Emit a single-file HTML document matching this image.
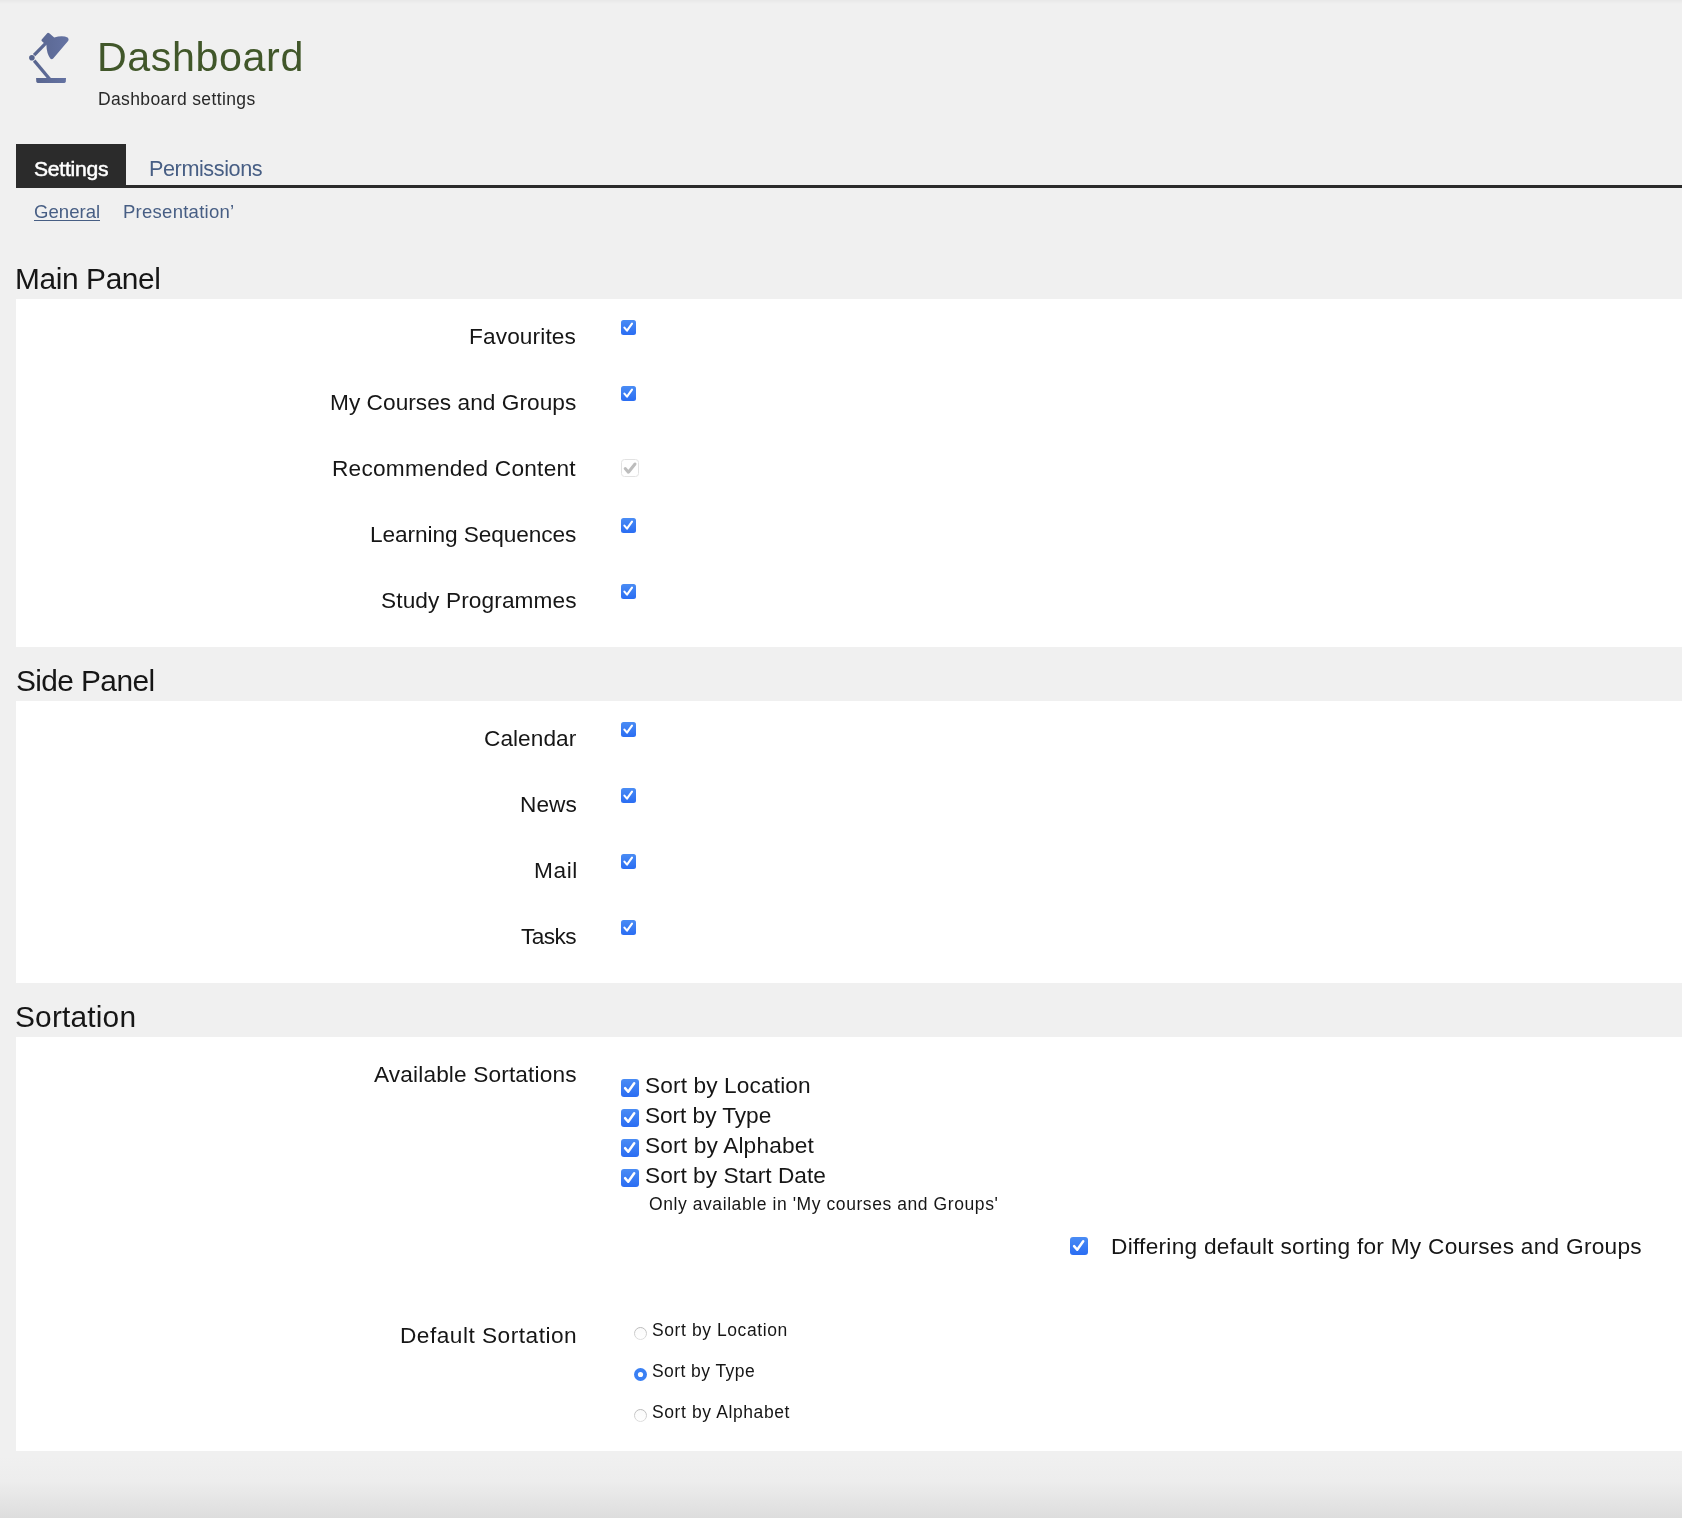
<!DOCTYPE html>
<html><head><meta charset="utf-8"><title>Dashboard</title>
<style>
html,body{margin:0;padding:0;}
body{width:1682px;height:1518px;position:relative;overflow:hidden;background:#f0f0f0;font-family:"Liberation Sans",sans-serif;}
.t{position:absolute;white-space:nowrap;line-height:0;will-change:transform;font-family:"Liberation Sans",sans-serif;}
.a{position:absolute;display:block;}
.b{position:absolute;}
</style></head><body>
<div class="b" style="left:0;top:0;width:1682px;height:4px;background:linear-gradient(#e8e8e8,#f0f0f0)"></div>
<div class="b" style="left:0;top:1456px;width:1682px;height:62px;background:linear-gradient(#f0f0f0 0%,#ededed 40%,#e4e4e4 75%,#dddddd 100%)"></div>
<div class="b" style="left:16px;top:144px;width:110px;height:44px;background:#2b2b2b"></div>
<div class="b" style="left:16px;top:185px;width:1666px;height:3px;background:#2b2b2b"></div>
<div class="b" style="left:34px;top:220px;width:66px;height:1px;background:#475e84"></div>
<div class="b" style="left:16px;top:299px;width:1666px;height:348px;background:#fff"></div>
<div class="b" style="left:16px;top:701px;width:1666px;height:282px;background:#fff"></div>
<div class="b" style="left:16px;top:1037px;width:1666px;height:414px;background:#fff"></div>
<svg class="a" style="left:0;top:0" width="100" height="100" viewBox="0 0 100 100">
<defs><linearGradient id="lg" gradientUnits="userSpaceOnUse" x1="29" y1="0" x2="69" y2="0"><stop offset="0" stop-color="#56638c"/><stop offset="1" stop-color="#6573a3"/></linearGradient></defs>
<g fill="url(#lg)">
<path d="M47.2,33.2 L41.7,39.4 Q41.1,40.4 41.9,41.3 L44.0,43.0 L46.4,45.0 Q46.6,53.5 50.3,58.4 Q51.7,60.0 53.2,58.4 L68.3,40.8 Q69.3,39.0 67.6,37.6 Q63.0,35.2 54.2,37.4 L49.3,33.3 Q48.0,32.5 47.2,33.2 Z"/>
<circle cx="31.9" cy="57.8" r="2.8"/>
<path d="M36.1,78.1 L66.0,78.1 L65.8,81.6 Q65.6,82.9 64.4,82.9 L37.6,82.9 Q36.4,82.9 36.3,81.6 Z"/>
</g>
<g stroke="url(#lg)" fill="none" stroke-width="3.3">
<line x1="34.1" y1="55.1" x2="45.4" y2="43.7"/>
<line x1="34.2" y1="60.6" x2="49.6" y2="79.0"/>
</g></svg>
<div class="t" style="left:96.92px;top:56.80px;font-size:41.2px;letter-spacing:0.600px;color:#41572a;">Dashboard</div>
<div class="t" style="left:97.96px;top:99.10px;font-size:17.51px;letter-spacing:0.376px;color:#282828;">Dashboard settings</div>
<div class="t" style="left:33.64px;top:168.80px;font-size:21.12px;letter-spacing:-0.250px;color:#ffffff;-webkit-text-stroke:0.5px #fff;">Settings</div>
<div class="t" style="left:149.43px;top:168.80px;font-size:21.63px;letter-spacing:-0.421px;color:#475e84;">Permissions</div>
<div class="t" style="left:33.67px;top:211.70px;font-size:18.54px;letter-spacing:0.041px;color:#475e84;">General</div>
<div class="t" style="left:122.98px;top:211.70px;font-size:18.54px;letter-spacing:0.250px;color:#475e84;">Presentation’</div>
<div class="t" style="left:15.05px;top:278.70px;font-size:29.87px;letter-spacing:-0.382px;color:#161616;">Main Panel</div>
<div class="t" style="left:15.64px;top:681.20px;font-size:29.87px;letter-spacing:-0.600px;color:#161616;">Side Panel</div>
<div class="t" style="left:15.34px;top:1017.10px;font-size:29.87px;letter-spacing:0.186px;color:#161616;">Sortation</div>
<div class="t" style="left:469.44px;top:335.80px;font-size:22.66px;letter-spacing:0.123px;color:#161616;">Favourites</div>
<div class="t" style="left:330.04px;top:401.90px;font-size:22.66px;letter-spacing:0.037px;color:#161616;">My Courses and Groups</div>
<div class="t" style="left:332.04px;top:468.00px;font-size:22.66px;letter-spacing:0.241px;color:#161616;">Recommended Content</div>
<div class="t" style="left:370.04px;top:534.00px;font-size:22.66px;letter-spacing:-0.092px;color:#161616;">Learning Sequences</div>
<div class="t" style="left:380.67px;top:600.00px;font-size:22.66px;letter-spacing:0.116px;color:#161616;">Study Programmes</div>
<div class="t" style="left:483.65px;top:737.90px;font-size:22.66px;letter-spacing:0.041px;color:#161616;">Calendar</div>
<div class="t" style="left:519.54px;top:804.00px;font-size:22.66px;letter-spacing:0.042px;color:#161616;">News</div>
<div class="t" style="left:533.68px;top:870.00px;font-size:22.66px;letter-spacing:0.600px;color:#161616;">Mail</div>
<div class="t" style="left:520.81px;top:935.80px;font-size:22.66px;letter-spacing:-0.600px;color:#161616;">Tasks</div>
<div class="t" style="left:373.86px;top:1074.10px;font-size:22.66px;letter-spacing:0.138px;color:#161616;">Available Sortations</div>
<div class="t" style="left:400.34px;top:1334.90px;font-size:22.66px;letter-spacing:0.492px;color:#161616;">Default Sortation</div>
<div class="t" style="left:644.57px;top:1085.10px;font-size:22.66px;letter-spacing:0.132px;color:#161616;">Sort by Location</div>
<div class="t" style="left:644.57px;top:1115.00px;font-size:22.66px;letter-spacing:-0.050px;color:#161616;">Sort by Type</div>
<div class="t" style="left:644.57px;top:1144.90px;font-size:22.66px;letter-spacing:0.166px;color:#161616;">Sort by Alphabet</div>
<div class="t" style="left:644.57px;top:1175.10px;font-size:22.66px;letter-spacing:0.051px;color:#161616;">Sort by Start Date</div>
<div class="t" style="left:649.07px;top:1203.50px;font-size:17.51px;letter-spacing:0.577px;color:#161616;">Only available in 'My courses and Groups'</div>
<div class="t" style="left:1111.14px;top:1246.40px;font-size:22.66px;letter-spacing:0.271px;color:#161616;">Differing default sorting for My Courses and Groups</div>
<div class="t" style="left:652.00px;top:1329.60px;font-size:17.51px;letter-spacing:0.584px;color:#161616;">Sort by Location</div>
<div class="t" style="left:652.00px;top:1370.70px;font-size:17.51px;letter-spacing:0.430px;color:#161616;">Sort by Type</div>
<div class="t" style="left:652.00px;top:1411.60px;font-size:17.51px;letter-spacing:0.600px;color:#161616;">Sort by Alphabet</div>
<svg class="a" style="left:621px;top:320px" width="15" height="15" viewBox="0 0 15 15"><defs><linearGradient id="g621320" x1="0" y1="0" x2="0" y2="1"><stop offset="0" stop-color="#4a8cf4"/><stop offset="1" stop-color="#2a6df3"/></linearGradient></defs><rect x="0" y="0" width="15" height="15" rx="2.50" fill="url(#g621320)"/><path d="M3.4,7.6 L6.0,10.6 L11.0,3.6" fill="none" stroke="#fff" stroke-width="2.1" stroke-linecap="round" stroke-linejoin="round"/></svg>
<svg class="a" style="left:621px;top:386px" width="15" height="15" viewBox="0 0 15 15"><defs><linearGradient id="g621386" x1="0" y1="0" x2="0" y2="1"><stop offset="0" stop-color="#4a8cf4"/><stop offset="1" stop-color="#2a6df3"/></linearGradient></defs><rect x="0" y="0" width="15" height="15" rx="2.50" fill="url(#g621386)"/><path d="M3.4,7.6 L6.0,10.6 L11.0,3.6" fill="none" stroke="#fff" stroke-width="2.1" stroke-linecap="round" stroke-linejoin="round"/></svg>
<svg class="a" style="left:621px;top:518px" width="15" height="15" viewBox="0 0 15 15"><defs><linearGradient id="g621518" x1="0" y1="0" x2="0" y2="1"><stop offset="0" stop-color="#4a8cf4"/><stop offset="1" stop-color="#2a6df3"/></linearGradient></defs><rect x="0" y="0" width="15" height="15" rx="2.50" fill="url(#g621518)"/><path d="M3.4,7.6 L6.0,10.6 L11.0,3.6" fill="none" stroke="#fff" stroke-width="2.1" stroke-linecap="round" stroke-linejoin="round"/></svg>
<svg class="a" style="left:621px;top:584px" width="15" height="15" viewBox="0 0 15 15"><defs><linearGradient id="g621584" x1="0" y1="0" x2="0" y2="1"><stop offset="0" stop-color="#4a8cf4"/><stop offset="1" stop-color="#2a6df3"/></linearGradient></defs><rect x="0" y="0" width="15" height="15" rx="2.50" fill="url(#g621584)"/><path d="M3.4,7.6 L6.0,10.6 L11.0,3.6" fill="none" stroke="#fff" stroke-width="2.1" stroke-linecap="round" stroke-linejoin="round"/></svg>
<svg class="a" style="left:621px;top:722px" width="15" height="15" viewBox="0 0 15 15"><defs><linearGradient id="g621722" x1="0" y1="0" x2="0" y2="1"><stop offset="0" stop-color="#4a8cf4"/><stop offset="1" stop-color="#2a6df3"/></linearGradient></defs><rect x="0" y="0" width="15" height="15" rx="2.50" fill="url(#g621722)"/><path d="M3.4,7.6 L6.0,10.6 L11.0,3.6" fill="none" stroke="#fff" stroke-width="2.1" stroke-linecap="round" stroke-linejoin="round"/></svg>
<svg class="a" style="left:621px;top:788px" width="15" height="15" viewBox="0 0 15 15"><defs><linearGradient id="g621788" x1="0" y1="0" x2="0" y2="1"><stop offset="0" stop-color="#4a8cf4"/><stop offset="1" stop-color="#2a6df3"/></linearGradient></defs><rect x="0" y="0" width="15" height="15" rx="2.50" fill="url(#g621788)"/><path d="M3.4,7.6 L6.0,10.6 L11.0,3.6" fill="none" stroke="#fff" stroke-width="2.1" stroke-linecap="round" stroke-linejoin="round"/></svg>
<svg class="a" style="left:621px;top:854px" width="15" height="15" viewBox="0 0 15 15"><defs><linearGradient id="g621854" x1="0" y1="0" x2="0" y2="1"><stop offset="0" stop-color="#4a8cf4"/><stop offset="1" stop-color="#2a6df3"/></linearGradient></defs><rect x="0" y="0" width="15" height="15" rx="2.50" fill="url(#g621854)"/><path d="M3.4,7.6 L6.0,10.6 L11.0,3.6" fill="none" stroke="#fff" stroke-width="2.1" stroke-linecap="round" stroke-linejoin="round"/></svg>
<svg class="a" style="left:621px;top:920px" width="15" height="15" viewBox="0 0 15 15"><defs><linearGradient id="g621920" x1="0" y1="0" x2="0" y2="1"><stop offset="0" stop-color="#4a8cf4"/><stop offset="1" stop-color="#2a6df3"/></linearGradient></defs><rect x="0" y="0" width="15" height="15" rx="2.50" fill="url(#g621920)"/><path d="M3.4,7.6 L6.0,10.6 L11.0,3.6" fill="none" stroke="#fff" stroke-width="2.1" stroke-linecap="round" stroke-linejoin="round"/></svg>
<svg class="a" style="left:621px;top:1079px" width="18" height="18" viewBox="0 0 15 15"><defs><linearGradient id="g6211079" x1="0" y1="0" x2="0" y2="1"><stop offset="0" stop-color="#4a8cf4"/><stop offset="1" stop-color="#2a6df3"/></linearGradient></defs><rect x="0" y="0" width="15" height="15" rx="2.50" fill="url(#g6211079)"/><path d="M3.4,7.6 L6.0,10.6 L11.0,3.6" fill="none" stroke="#fff" stroke-width="2.1" stroke-linecap="round" stroke-linejoin="round"/></svg>
<svg class="a" style="left:621px;top:1109px" width="18" height="18" viewBox="0 0 15 15"><defs><linearGradient id="g6211109" x1="0" y1="0" x2="0" y2="1"><stop offset="0" stop-color="#4a8cf4"/><stop offset="1" stop-color="#2a6df3"/></linearGradient></defs><rect x="0" y="0" width="15" height="15" rx="2.50" fill="url(#g6211109)"/><path d="M3.4,7.6 L6.0,10.6 L11.0,3.6" fill="none" stroke="#fff" stroke-width="2.1" stroke-linecap="round" stroke-linejoin="round"/></svg>
<svg class="a" style="left:621px;top:1139px" width="18" height="18" viewBox="0 0 15 15"><defs><linearGradient id="g6211139" x1="0" y1="0" x2="0" y2="1"><stop offset="0" stop-color="#4a8cf4"/><stop offset="1" stop-color="#2a6df3"/></linearGradient></defs><rect x="0" y="0" width="15" height="15" rx="2.50" fill="url(#g6211139)"/><path d="M3.4,7.6 L6.0,10.6 L11.0,3.6" fill="none" stroke="#fff" stroke-width="2.1" stroke-linecap="round" stroke-linejoin="round"/></svg>
<svg class="a" style="left:621px;top:1169px" width="18" height="18" viewBox="0 0 15 15"><defs><linearGradient id="g6211169" x1="0" y1="0" x2="0" y2="1"><stop offset="0" stop-color="#4a8cf4"/><stop offset="1" stop-color="#2a6df3"/></linearGradient></defs><rect x="0" y="0" width="15" height="15" rx="2.50" fill="url(#g6211169)"/><path d="M3.4,7.6 L6.0,10.6 L11.0,3.6" fill="none" stroke="#fff" stroke-width="2.1" stroke-linecap="round" stroke-linejoin="round"/></svg>
<svg class="a" style="left:1070px;top:1237px" width="18" height="18" viewBox="0 0 15 15"><defs><linearGradient id="g10701237" x1="0" y1="0" x2="0" y2="1"><stop offset="0" stop-color="#4a8cf4"/><stop offset="1" stop-color="#2a6df3"/></linearGradient></defs><rect x="0" y="0" width="15" height="15" rx="2.50" fill="url(#g10701237)"/><path d="M3.4,7.6 L6.0,10.6 L11.0,3.6" fill="none" stroke="#fff" stroke-width="2.1" stroke-linecap="round" stroke-linejoin="round"/></svg>
<svg class="a" style="left:621px;top:459px" width="18" height="18" viewBox="0 0 18 18"><rect x="0.5" y="0.5" width="17" height="17" rx="3" fill="#fff" stroke="#e2e2e2"/><path d="M4.2,9.6 L7.4,13.2 L14.0,5.0" fill="none" stroke="#bdbdbd" stroke-width="3" stroke-linecap="round" stroke-linejoin="round"/></svg>
<svg class="a" style="left:634px;top:1327px" width="13" height="13" viewBox="0 0 13 13"><defs><linearGradient id="rg1327" x1="0" y1="0" x2="0" y2="1"><stop offset="0" stop-color="#fafafa"/><stop offset="1" stop-color="#ffffff"/></linearGradient><linearGradient id="rs1327" x1="0" y1="0" x2="0" y2="1"><stop offset="0" stop-color="#b9b9b9"/><stop offset="1" stop-color="#dedede"/></linearGradient></defs><circle cx="6.5" cy="6.5" r="6" fill="url(#rg1327)" stroke="url(#rs1327)" stroke-width="1"/></svg>
<svg class="a" style="left:634px;top:1368px" width="13" height="13" viewBox="0 0 13 13"><circle cx="6.5" cy="6.5" r="6.5" fill="#3a80f4"/><circle cx="6.5" cy="6.5" r="2.6" fill="#fff"/></svg>
<svg class="a" style="left:634px;top:1409px" width="13" height="13" viewBox="0 0 13 13"><defs><linearGradient id="rg1409" x1="0" y1="0" x2="0" y2="1"><stop offset="0" stop-color="#fafafa"/><stop offset="1" stop-color="#ffffff"/></linearGradient><linearGradient id="rs1409" x1="0" y1="0" x2="0" y2="1"><stop offset="0" stop-color="#b9b9b9"/><stop offset="1" stop-color="#dedede"/></linearGradient></defs><circle cx="6.5" cy="6.5" r="6" fill="url(#rg1409)" stroke="url(#rs1409)" stroke-width="1"/></svg>
</body></html>
